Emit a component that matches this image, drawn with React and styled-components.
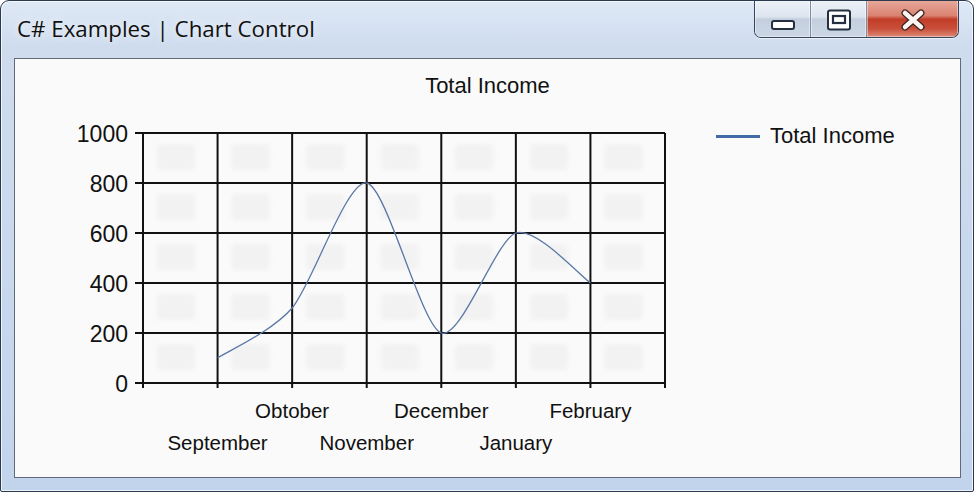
import React from 'react';
import styled, { createGlobalStyle } from 'styled-components';

const GlobalStyle = createGlobalStyle`
  html, body {
    margin: 0;
    padding: 0;
    background: #ffffff;
  }
`;

const Window = styled.div`
  box-sizing: border-box;
  width: 974px;
  height: 492px;
  display: flex;
  flex-direction: column;
  border: 1px solid #2b3a4e;
  border-radius: 9px 9px 2px 2px;
  background: linear-gradient(to bottom, #dfe9f6 0%, #cfdcee 45px, #c2d4ec 100%);
  box-shadow: inset 0 0 0 1px rgba(255, 255, 255, 0.7);
  overflow: hidden;
`;

const TitleBar = styled.div`
  height: 57px;
  display: flex;
  justify-content: space-between;
  align-items: flex-start;
  flex-shrink: 0;
`;

const Caption = styled.div`
  font-family: "Open Sans", "Noto Sans", sans-serif;
  font-size: 22.3px;
  color: #101010;
  padding-left: 16px;
  line-height: 57px;
  height: 57px;
  margin-top: -1px;
  text-shadow: 0 0 8px rgba(255, 255, 255, 0.9);
`;

const Controls = styled.div`
  display: flex;
  height: 37px;
  margin-top: -1px;
  margin-right: 14px;
  border: 1px solid #35445a;
  border-top: none;
  border-radius: 0 0 7px 7px;
  overflow: hidden;
  box-shadow: 0 1px 0 rgba(255, 255, 255, 0.6);
`;

const CtrlButton = styled.div`
  width: ${p => p.$w}px;
  display: flex;
  align-items: center;
  justify-content: center;
  border-left: ${p => (p.$first ? 'none' : '1px solid #7f8da0')};
  background: ${p =>
    p.$close
      ? 'linear-gradient(to bottom, #e8aa9c 0%, #da8371 42%, #c23d29 52%, #c9503b 78%, #dd8a77 100%)'
      : 'linear-gradient(to bottom, #edf2f8 0%, #dde5ef 45%, #c3cfde 52%, #ccd7e4 100%)'};
  box-shadow: inset 0 0 0 1px rgba(255, 255, 255, 0.45);
`;

const IconSlot = styled.div`
  display: flex;
  margin-top: ${p => p.$top}px;
`;

const Client = styled.div`
  flex: 1;
  display: flex;
  flex-direction: column;
  margin: 0 12px 13px 13px;
  border: 1px solid #5f6b79;
  background: #fafafa;
  font-family: "Liberation Sans", Arial, sans-serif;
  color: #111111;
`;

const ChartTitle = styled.div`
  margin-top: 15px;
  height: 24px;
  line-height: 24px;
  font-size: 22px;
  text-align: center;
`;

const ChartBody = styled.div`
  flex: 1;
  display: flex;
  align-items: flex-start;
`;

const Legend = styled.div`
  display: flex;
  align-items: center;
  gap: 10px;
  margin-left: 11px;
  margin-top: 26px;
  font-size: 22px;
  line-height: 24px;
`;

const LegendLine = styled.span`
  width: 44px;
  height: 3px;
  background: #416ca8;
`;

// plot geometry, in svg coordinates
const X0 = 128;
const X1 = 650;
const Y0 = 35;
const Y1 = 285;
const COLS = 7;
const step = (X1 - X0) / COLS;
const xAt = i => X0 + step * i;
const yAt = v => Y1 - (v / 1000) * (Y1 - Y0);

const months = ['September', 'Obtober', 'November', 'December', 'January', 'February'];
const income = [100, 300, 800, 200, 600, 400];

// catmull-rom style spline through the data points
function splinePath(pts) {
  let d = `M ${pts[0][0]} ${pts[0][1]}`;
  for (let i = 0; i < pts.length - 1; i++) {
    const p0 = pts[i - 1] || pts[i];
    const p1 = pts[i];
    const p2 = pts[i + 1];
    const p3 = pts[i + 2] || p2;
    const t = 0.8 / 6;
    const c1x = p1[0] + (p2[0] - p0[0]) * t;
    const c1y = p1[1] + (p2[1] - p0[1]) * t;
    const c2x = p2[0] - (p3[0] - p1[0]) * t;
    const c2y = p2[1] - (p3[1] - p1[1]) * t;
    d += ` C ${c1x} ${c1y}, ${c2x} ${c2y}, ${p2[0]} ${p2[1]}`;
  }
  return d;
}

function Plot() {
  const pts = income.map((v, i) => [xAt(i + 1), yAt(v)]);
  const rows = [0, 200, 400, 600, 800, 1000];
  const cells = [];
  for (let c = 0; c < COLS; c++) {
    for (let r = 0; r < 5; r++) {
      cells.push(
        <rect
          key={`${c}-${r}`}
          x={xAt(c) + 14}
          y={Y0 + r * 50 + 11}
          width={38}
          height={26}
          rx={3}
          fill="#f2f2f2"
          filter="url(#soft)"
        />
      );
    }
  }
  return (
    <svg width="690" height="378" style={{ display: 'block', flexShrink: 0 }}>
      <defs>
        <filter id="soft">
          <feGaussianBlur stdDeviation="2.5" />
        </filter>
      </defs>
      {cells}
      <g stroke="#111" strokeWidth="2" fill="none">
        {rows.map(v => (
          <line key={v} x1={X0 - 8} x2={X1} y1={yAt(v)} y2={yAt(v)} />
        ))}
        {Array.from({ length: COLS + 1 }, (_, i) => (
          <line key={i} x1={xAt(i)} x2={xAt(i)} y1={Y0} y2={Y1 + 5} />
        ))}
      </g>
      <path d={splinePath(pts)} fill="none" stroke="#5a77a6" strokeWidth="1.3" />
      <g fontFamily='"Liberation Sans", Arial, sans-serif' fill="#111">
        {rows.map(v => (
          <text key={v} x={113} y={yAt(v) + 8.5} fontSize="23" textAnchor="end">
            {v}
          </text>
        ))}
        {months.map((m, i) => (
          <text
            key={m}
            x={xAt(i + 1)}
            y={i % 2 === 0 ? 352 : 320}
            fontSize="20.5"
            textAnchor="middle"
          >
            {m}
          </text>
        ))}
      </g>
    </svg>
  );
}

function MinimizeIcon() {
  return (
    <svg width="26" height="12" viewBox="0 0 26 12">
      <rect x="2" y="2" width="22" height="8" rx="2" fill="#fff" stroke="#24303f" strokeWidth="2" />
    </svg>
  );
}

function MaximizeIcon() {
  return (
    <svg width="26" height="22" viewBox="0 0 26 22">
      <rect x="2" y="1.5" width="22" height="19" rx="2" fill="#fff" stroke="#24303f" strokeWidth="2" />
      <rect x="7" y="7" width="12" height="7" fill="#fff" stroke="#24303f" strokeWidth="2.2" />
    </svg>
  );
}

function CloseIcon() {
  return (
    <svg width="26" height="22" viewBox="0 0 26 22">
      <path d="M5 4 L21 18 M21 4 L5 18" stroke="#3b2621" strokeWidth="7" strokeLinecap="round" />
      <path d="M5 4 L21 18 M21 4 L5 18" stroke="#fbf4f2" strokeWidth="4.5" strokeLinecap="round" />
    </svg>
  );
}

export default function App() {
  return (
    <>
      <GlobalStyle />
      <Window>
        <TitleBar>
          <Caption>C# Examples | Chart Control</Caption>
          <Controls>
            <CtrlButton $w={55} $first>
              <IconSlot $top={12}>
                <MinimizeIcon />
              </IconSlot>
            </CtrlButton>
            <CtrlButton $w={55}>
              <IconSlot $top={2}>
                <MaximizeIcon />
              </IconSlot>
            </CtrlButton>
            <CtrlButton $w={91} $close>
              <IconSlot $top={2}>
                <CloseIcon />
              </IconSlot>
            </CtrlButton>
          </Controls>
        </TitleBar>
        <Client>
          <ChartTitle>Total Income</ChartTitle>
          <ChartBody>
            <Plot />
            <Legend>
              <LegendLine />
              Total Income
            </Legend>
          </ChartBody>
        </Client>
      </Window>
    </>
  );
}
